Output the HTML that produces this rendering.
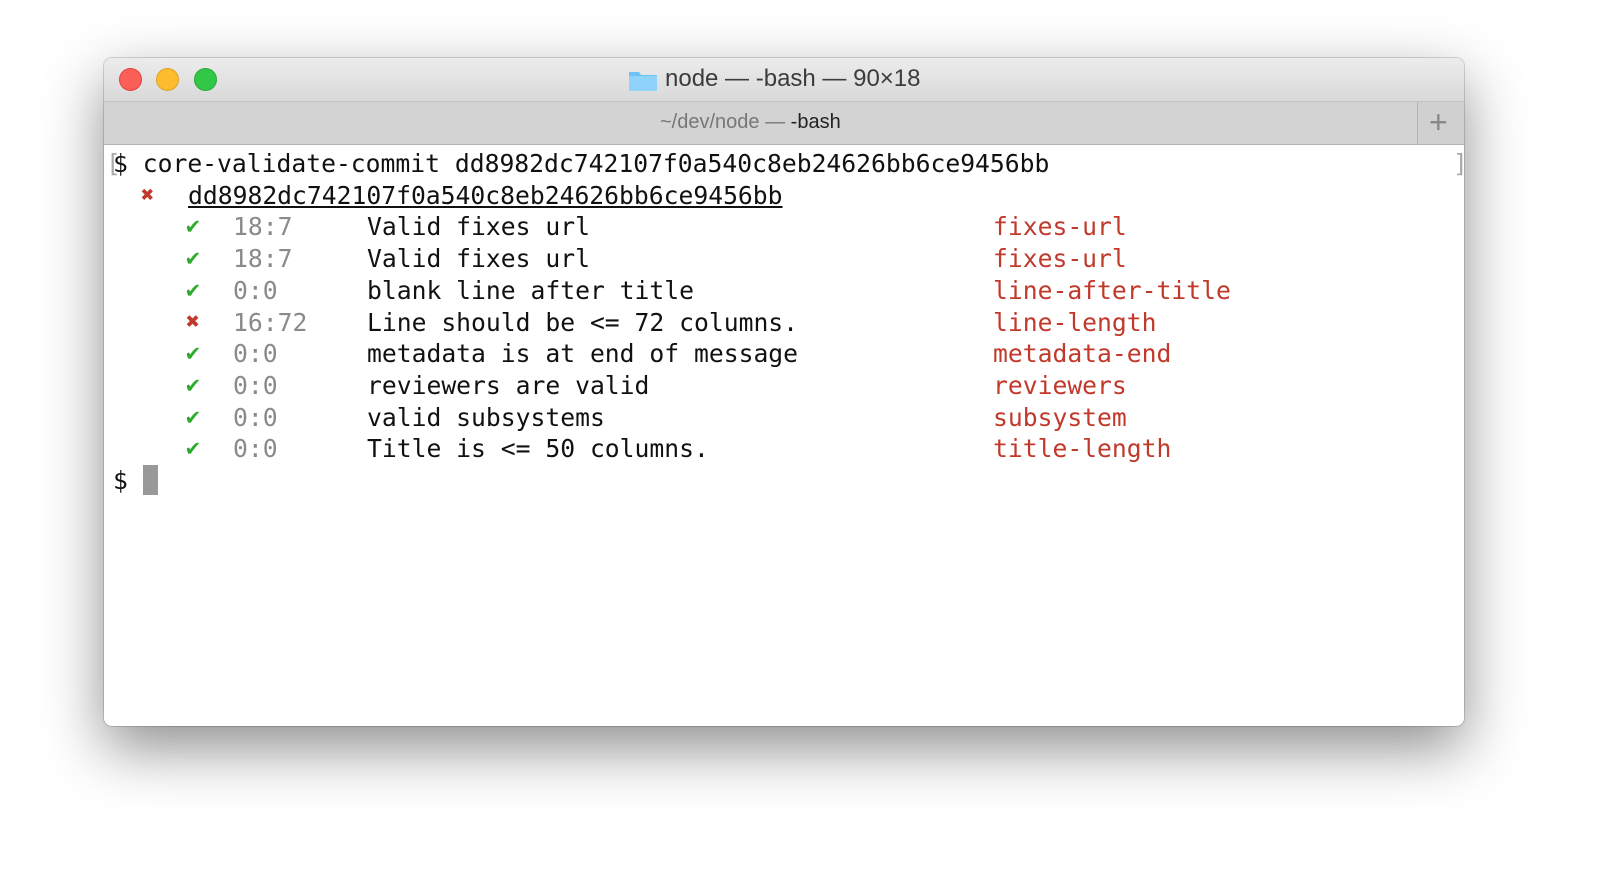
<!DOCTYPE html>
<html><head><meta charset="utf-8"><style>
body{margin:0;width:1600px;height:893px;background:#fff;position:relative;overflow:hidden;font-family:"Liberation Sans",sans-serif}
.win{position:absolute;left:104px;top:58px;width:1360px;height:668px;border-radius:8px;overflow:hidden;background:#fff;box-shadow:0 22px 60px rgba(0,0,0,.45),0 0 0 1px rgba(0,0,0,.15)}
.title{position:absolute;left:0;top:0;width:100%;height:43px;background:linear-gradient(#ececec,#d9d9d9);border-bottom:1px solid #c4c4c4}
.dot{position:absolute;top:10px;width:23px;height:23px;border-radius:50%}
.tab{position:absolute;left:0;top:44px;width:100%;height:42px;background:#d3d3d3;border-bottom:1px solid #b2b2b2}
.t{position:absolute;font-size:24px;color:#3c3c3c;white-space:nowrap}
.term{font-family:"DejaVu Sans Mono","Liberation Mono",monospace;font-size:24.7px;position:absolute;white-space:pre;color:#111;line-height:31.7px}
.g{color:#2eaa2e}.r{color:#c0392b}.gr{color:#8a8a8a}
</style></head><body>
<div class="win">
 <div class="title">
  <div class="dot" style="left:15px;background:#fc5f57;border:1px solid #e0443e;width:21px;height:21px"></div>
  <div class="dot" style="left:52px;background:#fdbc2e;border:1px solid #dea123;width:21px;height:21px"></div>
  <div class="dot" style="left:90px;background:#33c748;border:1px solid #27aa35;width:21px;height:21px"></div>
  <svg style="position:absolute;left:524px;top:11px" width="30" height="23"><path d="M1 3 h10 l2 3 h16 v16 h-28z" fill="#6cc3f3"/><path d="M1 7 h28 v15 h-28z" fill="#8fd3fa"/></svg>
  <div class="t" style="left:561px;top:7px">node — -bash — 90×18</div>
 </div>
 <div class="tab">
  <div class="t" style="left:556px;top:9px;font-size:20px;color:#777">~/dev/node — <span style="color:#222">-bash</span></div>
  <div style="position:absolute;left:1313px;top:0;width:47px;height:42px;border-left:1px solid #b2b2b2;background:#d0d0d0"></div>
  <div class="t" style="left:1325px;top:2px;font-size:32px;color:#888;font-weight:300">+</div>
 </div>
</div>
<div class="term" style="left:106px;top:148px;color:#aaa">[</div>
<div class="term" style="left:1453px;top:148px;color:#aaa">]</div>
<div class="term" style="left:113px;top:148px">$ core-validate-commit dd8982dc742107f0a540c8eb24626bb6ce9456bb</div>
<div class="term r" style="left:141px;top:180px;font-size:22px">✖</div>
<div class="term" style="left:188px;top:180px;text-decoration:underline">dd8982dc742107f0a540c8eb24626bb6ce9456bb</div>
<div id="rows"></div>
<div style="position:absolute;left:143px;top:465px;width:15px;height:30px;background:#999"></div>
<div class="term" style="left:113px;top:465px">$</div>
<script>
var R=[["g","18:7","Valid fixes url","fixes-url"],["g","18:7","Valid fixes url","fixes-url"],["g","0:0","blank line after title","line-after-title"],["r","16:72","Line should be <= 72 columns.","line-length"],["g","0:0","metadata is at end of message","metadata-end"],["g","0:0","reviewers are valid","reviewers"],["g","0:0","valid subsystems","subsystem"],["g","0:0","Title is <= 50 columns.","title-length"]];
var h="";R.forEach(function(r,i){var t=148+31.7*(i+2);
h+='<div class="term '+r[0]+'" style="left:186px;top:'+t+'px;font-size:23px">'+(r[0]=="g"?"✔":"✖")+'</div>';
h+='<div class="term gr" style="left:233px;top:'+t+'px">'+r[1]+'</div>';
h+='<div class="term" style="left:367px;top:'+t+'px">'+r[2].replace(/</g,"&lt;")+'</div>';
h+='<div class="term r" style="left:993px;top:'+t+'px">'+r[3]+'</div>';});
document.getElementById("rows").innerHTML=h;
</script>
</body></html>
